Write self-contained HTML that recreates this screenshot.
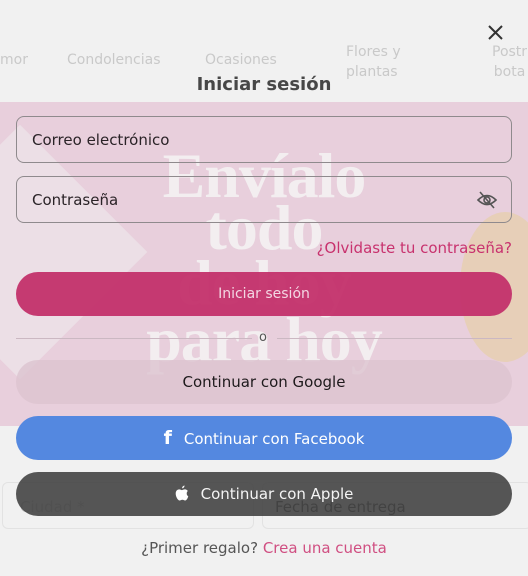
<!DOCTYPE html>
<html><head><meta charset="utf-8"><style>
*{margin:0;padding:0;box-sizing:border-box}
body{width:528px;height:576px;overflow:hidden;background:#f1f1f1;font-family:"DejaVu Sans",sans-serif;position:relative}
.a{position:absolute}
.band{left:0;top:102px;width:528px;height:324px;background:#e8cfdc;overflow:hidden}
.big{left:0;width:528px;text-align:center;font-family:"Liberation Serif",serif;font-weight:bold;color:#f3eef0;font-size:64px;line-height:56px;letter-spacing:-1px}
.nav{color:#c9c9c9;font-size:14px}
.inp{left:16px;width:496px;height:47px;border:1px solid #8f8a8d;border-radius:8px;font-size:15px;color:#2a2327;padding:14px 15px}
.btn{left:16px;width:496px;height:44px;border-radius:22px;font-size:15px;text-align:center;line-height:44px}
</style></head><body>
<div class="a nav" style="left:0;top:52px">mor</div>
<div class="a nav" style="left:67px;top:52px">Condolencias</div>
<div class="a nav" style="left:205px;top:52px">Ocasiones</div>
<div class="a nav" style="left:346px;top:42px;line-height:20px">Flores y<br>plantas</div>
<div class="a nav" style="left:492px;top:42px;line-height:20px;text-align:center">Postr<br>bota</div>
<svg class="a" style="left:487px;top:24px" width="17" height="17" viewBox="0 0 17 17"><path d="M2 2L15 15M15 2L2 15" stroke="#333" stroke-width="2"/></svg>
<div class="a" style="left:0;top:74px;width:528px;text-align:center;font-size:18px;font-weight:bold;color:#474747">Iniciar sesión</div>
<div class="a band">
<div class="a" style="left:-70px;top:60px;width:180px;height:180px;background:#eee6ea;transform:rotate(45deg);opacity:.7"></div>
<div class="a" style="left:460px;top:110px;width:90px;height:150px;background:#e6cf8c;border-radius:50%;opacity:.45"></div>
</div>
<div class="a big" style="top:148px">Envíalo</div>
<div class="a big" style="top:200px">todo</div>
<div class="a big" style="top:255px">de hoy</div>
<div class="a big" style="top:312px">para hoy</div>
<div class="a inp" style="top:116px">Correo electrónico</div>
<div class="a inp" style="top:176px">Contraseña</div>
<svg class="a" style="left:476px;top:190px" width="22" height="20" viewBox="0 0 22 20"><path d="M2 10Q11 1 20 10Q11 19 2 10Z" fill="none" stroke="#555" stroke-width="1.6"/><circle cx="11" cy="10" r="3" fill="none" stroke="#555" stroke-width="1.6"/><path d="M4 2L18 18" stroke="#555" stroke-width="1.6"/></svg>
<div class="a" style="right:16px;top:239px;font-size:15px;color:#c8326e">¿Olvidaste tu contraseña?</div>
<div class="a btn" style="top:272px;background:rgba(195,48,106,.95);color:#f3d7e3;font-size:14px">Iniciar sesión</div>
<div class="a" style="left:16px;top:338px;width:236px;height:1px;background:#cbb8c2"></div>
<div class="a" style="left:277px;top:338px;width:235px;height:1px;background:#cbb8c2"></div>
<div class="a" style="left:259px;top:330px;font-size:13px;color:#555">o</div>
<div class="a btn" style="top:360px;background:rgba(220,195,208,.8);color:#1e1a1c">Continuar con Google</div>
<div class="a btn" style="top:416px;background:#5488e0;color:#fff">
<span style="font-weight:bold;font-size:19px;margin-right:12px">f</span>Continuar con Facebook</div>
<div class="a" style="left:2px;top:482px;width:252px;height:47px;border:1px solid #e2e2e2;border-radius:6px;color:#c4c4c4;padding:15px 17px;font-size:15px">Ciudad *</div>
<div class="a" style="left:262px;top:482px;width:270px;height:47px;border:1px solid #e2e2e2;border-radius:6px;color:#333;padding:15px 12px;font-size:15px">Fecha de entrega</div>
<div class="a btn" style="top:472px;background:rgba(68,68,68,.9);color:#f4f4f4">
<svg width="14" height="16" viewBox="0 0 14 16" style="vertical-align:-2px;margin-right:12px"><path d="M9.5 0.5C9.6 2 8.5 3.3 7.1 3.3C7 2 8.1 0.7 9.5 0.5ZM11.7 8.5C11.7 10.5 13.2 11.2 13.3 11.3C12.8 13 11.6 15.5 10.2 15.5C9 15.5 8.8 14.8 7.4 14.8C6 14.8 5.7 15.5 4.6 15.5C3.2 15.6 0.7 12 0.7 8.6C0.7 5.8 2.5 4.4 4.2 4.4C5.3 4.4 6.2 5.1 6.9 5.1C7.5 5.1 8.6 4.3 9.9 4.4C10.4 4.4 11.9 4.6 12.8 6C12.7 6.1 11.7 6.8 11.7 8.5Z" fill="#fff"/></svg>Continuar con Apple</div>
<div class="a" style="left:0;top:539px;width:528px;text-align:center;font-size:15px;color:#555">¿Primer regalo? <span style="color:#d04f82">Crea una cuenta</span></div>
</body></html>
